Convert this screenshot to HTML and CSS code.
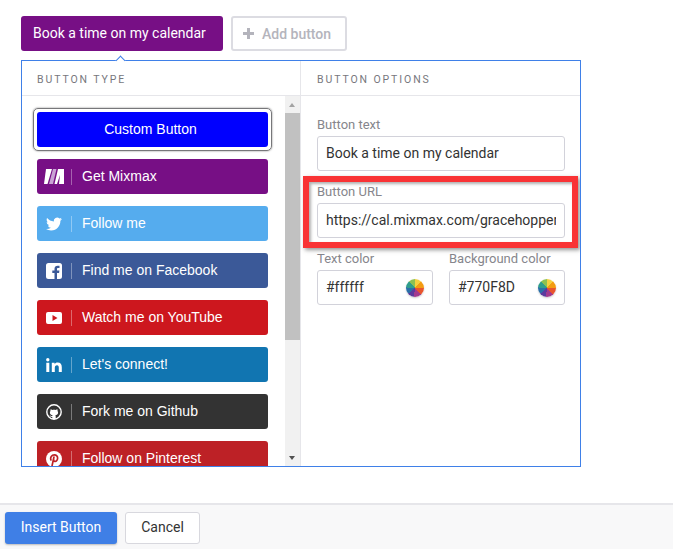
FILE: index.html
```html
<!DOCTYPE html>
<html lang="en">
<head>
<meta charset="utf-8">
<title>Insert Button</title>
<link rel="stylesheet" href="styles.css">
</head>
<body>
<div class="tabs">
  <button class="tab-active">Book a time on my calendar</button>
  <button class="tab-add"><svg class="plus" viewBox="0 0 11 11" width="11" height="11"><path d="M4 0h3v4h4v3H7v4H4V7H0V4h4z" fill="#b4b4bc"/></svg>Add button</button>
</div>
<div class="panel-wrap">
  <span class="caret"></span>
  <div class="panel">
    <section class="col-left">
      <h2 class="col-title">BUTTON TYPE</h2>
      <div class="list-wrap">
        <div class="list">
          <div class="selected"><div class="btn btn-custom">Custom Button</div></div>
          <div class="btn mixmax"><span class="ic"><svg viewBox="0 0 20 15" width="20" height="15"><path d="M0 15 2 0h6L3.500 15z" fill="#fff"/><path d="M5 15 9 0h3.500L9 15z" fill="#c9a3d4"/><path d="M10.500 15 14 0h6v15h-5l1-9-3 9z" fill="#fff"/></svg></span><span class="sep"></span>Get Mixmax</div>
          <div class="btn twitter"><span class="ic"><svg viewBox="0 0 24 24" width="16" height="16"><path fill="#fff" d="M23.950 4.570a10 10 0 0 1-2.820.77 4.960 4.960 0 0 0 2.160-2.720c-.95.550-2 .96-3.130 1.190a4.920 4.920 0 0 0-8.380 4.480C7.690 8.090 4.070 6.130 1.640 3.160a4.820 4.820 0 0 0-.66 2.470c0 1.710.87 3.210 2.190 4.100a4.900 4.900 0 0 1-2.230-.61v.06a4.920 4.920 0 0 0 3.950 4.830 5 5 0 0 1-2.210.08 4.940 4.940 0 0 0 4.600 3.420A9.870 9.870 0 0 1 0 19.540a13.940 13.940 0 0 0 7.550 2.210c9.050 0 14-7.500 14-13.980 0-.21 0-.42-.02-.63a9.940 9.940 0 0 0 2.420-2.570z"/></svg></span><span class="sep"></span>Follow me</div>
          <div class="btn facebook"><span class="ic"><svg viewBox="0 0 16 16" width="16" height="16"><path fill="#fff" d="M2.500 0h11A2.500 2.500 0 0 1 16 2.500v11a2.500 2.500 0 0 1-2.500 2.500H11v-6h2.100l.3-2.400H11V6.100c0-.7.200-1.100 1.200-1.100h1.300V2.800c-.3 0-1-.1-1.900-.1-1.900 0-3.100 1.100-3.100 3.200v1.700H6.300V10h2.200v6h-6A2.500 2.500 0 0 1 0 13.500v-11A2.500 2.500 0 0 1 2.500 0z"/></svg></span><span class="sep"></span>Find me on Facebook</div>
          <div class="btn youtube"><span class="ic"><svg viewBox="0 0 16 12" width="16" height="12"><path fill="#fff" fill-rule="evenodd" d="M2 0h12a2 2 0 0 1 2 2v8a2 2 0 0 1-2 2H2a2 2 0 0 1-2-2V2a2 2 0 0 1 2-2zm4.500 3v6l5-3z"/></svg></span><span class="sep"></span>Watch me on YouTube</div>
          <div class="btn linkedin"><span class="ic"><svg viewBox="0 0 16 14" width="16" height="14"><path fill="#fff" d="M.300 4.700h3v9.300h-3zM1.800 0a1.700 1.700 0 1 1 0 3.400 1.700 1.700 0 0 1 0-3.400zM5.800 4.700h2.800V6c.5-.9 1.600-1.500 3-1.500 3 0 4.200 1.800 4.200 4.800V14h-3V9.800c0-1.300-.3-2.600-1.800-2.600s-2.200 1.100-2.200 2.600V14h-3z"/></svg></span><span class="sep"></span>Let's connect!</div>
          <div class="btn github"><span class="ic"><svg viewBox="0 0 16 16" width="16" height="16"><circle cx="8" cy="8" r="7.200" fill="none" stroke="#fff" stroke-width="1.400"/><path fill="#fff" d="M6.300 15v-2c-1.500.2-2-.5-2.300-1.200-.2-.4-.5-.6-.7-.8.500-.1 1 .2 1.300.7.300.4.800.6 1.700.3 0-.3.200-.6.400-.8-1.500-.2-2.800-.9-2.800-2.800 0-.6.200-1.100.6-1.500-.1-.4-.2-1 .1-1.600.6 0 1.200.3 1.600.6.900-.2 2.700-.2 3.600 0 .4-.3 1-.6 1.600-.6.300.6.200 1.200.1 1.600.4.400.6.900.6 1.500 0 1.900-1.300 2.600-2.800 2.800.3.300.4.700.4 1.200v2.600z"/></svg></span><span class="sep"></span>Fork me on Github</div>
          <div class="btn pinterest"><span class="ic"><svg viewBox="0 0 16 16" width="16" height="16"><circle cx="8" cy="8" r="8" fill="#fff"/><path fill="none" stroke="#bd2126" stroke-width="1.700" stroke-linecap="round" d="M4.900 8.900C4 6.300 5.700 3.900 8.300 3.900c2.200 0 3.400 1.500 3.300 3.300-.1 1.900-1.200 3.300-2.600 3.200-1.100-.1-1.500-.9-1.300-1.800M7.900 6.200 6.100 14.600"/></svg></span><span class="sep"></span>Follow on Pinterest</div>
        </div>
        <div class="scrollbar">
          <span class="arrow-up"></span>
          <span class="track"><span class="thumb"></span></span>
          <span class="arrow-down"></span>
        </div>
      </div>
    </section>
    <section class="col-right">
      <h2 class="col-title">BUTTON OPTIONS</h2>
      <div class="form">
        <label class="field"><span class="lbl">Button text</span><span class="input"><span class="value">Book a time on my calendar</span></span></label>
        <label class="field"><span class="lbl">Button URL</span><span class="input"><span class="value">https://cal.mixmax.com/gracehopper</span></span></label>
        <div class="color-row">
          <label class="field"><span class="lbl">Text color</span><span class="input"><span class="value">#ffffff</span><span class="wheel"></span></span></label>
          <label class="field"><span class="lbl">Background color</span><span class="input"><span class="value">#770F8D</span><span class="wheel"></span></span></label>
        </div>
      </div>
    </section>
    <div class="highlight"></div>
  </div>
</div>
<footer class="footer">
  <button class="insert">Insert Button</button>
  <button class="cancel">Cancel</button>
</footer>
</body>
</html>
```
FILE: styles.css
```css
* { box-sizing: border-box; }
html, body { margin: 0; padding: 0; }
body {
  width: 673px; height: 549px; overflow: hidden; background: #fff;
  font-family: Roboto, "Liberation Sans", sans-serif;
  display: flex; flex-direction: column;
}
button { font-family: inherit; cursor: pointer; }
.tabs { display: flex; gap: 8px; padding: 16px 0 0 21px; height: 60px; }
.tab-active {
  width: 202px; height: 35px; background: #770f85; color: #fff; border: 0;
  border-radius: 3px; font-size: 14px; padding: 0 0 1px 12px; text-align: left;
}
.tab-add {
  width: 116px; height: 35px; background: #fff; border: 2px solid #dcdce2; border-radius: 3px;
  color: #b4b4bc; font-size: 14px; font-weight: 500; display: flex; align-items: center;
  padding: 0 0 0 10px; gap: 8px;
}
.panel-wrap { position: relative; margin-left: 21px; width: 560px; height: 407px; }
.caret {
  position: absolute; left: 96px; top: -3px; width: 7px; height: 7px; background: #fff;
  border-left: 1px solid #3f80e8; border-top: 1px solid #3f80e8; transform: rotate(45deg); z-index: 1;
}
.panel {
  position: relative; display: flex; width: 100%; height: 100%;
  border: 1px solid #3f80e8; overflow: hidden;
}
.col-left { flex: none; width: 279px; border-right: 1px solid #e6e6ea; display: flex; flex-direction: column; }
.col-right { flex: none; width: 279px; min-width: 0; display: flex; flex-direction: column; }
.col-title {
  margin: 0; height: 35px; border-bottom: 1px solid #e6e6ea; padding: 12px 0 0 15px;
  font-size: 10.500px; line-height: 13px; font-weight: 400; letter-spacing: 1.900px; color: #77777d;
}
.col-right .col-title { padding-left: 16px; }
.list-wrap { flex: 1; display: flex; min-height: 0; }
.list { width: 263px; padding: 16px 0 0 15px; display: flex; flex-direction: column; gap: 12px; overflow: hidden; }
.btn {
  flex: none; width: 231px; height: 35px; border-radius: 3px; color: #fff; display: flex; align-items: center;
  font-family: "Liberation Sans", Arial, sans-serif; font-size: 14px; padding-bottom: 2px;
}
.selected {
  flex: none; width: 239px; height: 43px; margin: -4px 0 -4px -4px; padding: 3px;
  border: 1px solid #77777a; border-radius: 5px; box-shadow: 0 0 2px #777;
}
.btn-custom { background: #0000ff; justify-content: center; padding-right: 4px; }
.ic { width: 34px; flex: none; display: flex; justify-content: center; margin-top: 2px; }
.sep { width: 1px; height: 16px; background: rgba(255, 255, 255, .35); margin: 2px 10px 0 0; flex: none; }
.mixmax { background: #770f85; }
.twitter { background: #55acee; }
.facebook { background: #3b5998; }
.youtube { background: #cd171e; }
.linkedin { background: #1175b1; }
.github { background: #333; }
.pinterest { background: #bd2126; }
.scrollbar { flex: none; width: 15px; background: #f1f1f1; display: flex; flex-direction: column; align-items: center; }
.arrow-up, .arrow-down { flex: none; width: 15px; height: 17px; position: relative; }
.arrow-up::after, .arrow-down::after {
  content: ""; position: absolute; left: 4px; width: 0; height: 0;
  border-left: 3.500px solid transparent; border-right: 3.500px solid transparent;
}
.arrow-up::after { top: 7px; border-bottom: 4px solid #a3a3a3; }
.arrow-down::after { bottom: 6px; border-top: 4px solid #505050; }
.track { flex: 1; width: 15px; display: block; }
.thumb { display: block; height: 227px; background: #c1c1c1; }
.form { padding: 21px 15px 0 16px; display: flex; flex-direction: column; gap: 13px; }
.field { display: flex; flex-direction: column; min-width: 0; flex: 1 1 0; }
.lbl { font-size: 13px; line-height: 15px; color: #86868c; margin-bottom: 4px; }
.input {
  height: 35px; border: 1px solid #d2d2da; border-radius: 3px; background: #fff; color: #333;
  padding: 0 8px; font-size: 14px; display: flex; align-items: center; justify-content: space-between; gap: 8px;
}
.value { flex: 1; min-width: 0; overflow: hidden; white-space: nowrap; padding-bottom: 2px; }
.color-row { display: flex; gap: 16px; }
.wheel {
  width: 18px; height: 18px; border-radius: 50%; flex: none;
  background: conic-gradient(#f4d03f 0 12%, #f39c12 12% 25%, #e8552e 25% 38%, #a23a8e 38% 52%, #5b3a9e 52% 64%, #2a6fa8 64% 76%, #2f9d8c 76% 88%, #8cc152 88% 100%);
  box-shadow: 0 1px 2px rgba(0, 0, 0, .2);
}
.highlight {
  position: absolute; left: 281px; top: 115px; width: 275px; height: 72px;
  border: 6px solid #f93335; box-shadow: 2px 2px 4px rgba(60, 60, 60, .55), inset 2px 2px 3px rgba(60, 60, 60, .4);
  pointer-events: none;
}
.footer {
  margin-top: 36px; flex: 1; background: #f8f8f9; border-top: 2px solid #e6e6ea;
  display: flex; gap: 8px; padding: 7px 0 0 5px;
}
.insert {
  width: 112px; height: 32px; background: #3f7fe6; color: #fff; border: 0; border-radius: 3px; padding: 0 0 2px;
  font-size: 14px; font-weight: 400; box-shadow: 0 1px 2px rgba(0,0,0,.25);
}
.cancel {
  width: 75px; height: 32px; background: #fff; color: #333; border: 1px solid #d8d8de; border-radius: 3px; font-size: 14px; padding: 0 0 2px;
}
```
